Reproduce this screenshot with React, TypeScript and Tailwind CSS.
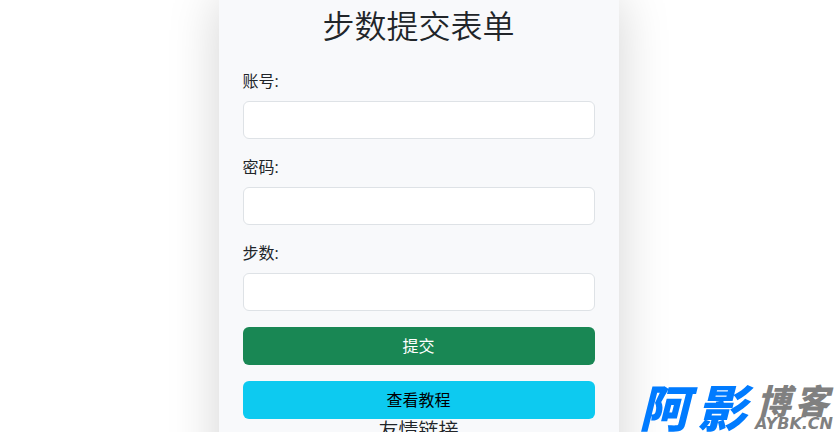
import { useState } from 'react'
import type { FormEvent } from 'react'

const fields = [
  { id: 'account', label: '账号:', type: 'text' },
  { id: 'password', label: '密码:', type: 'password' },
  { id: 'steps', label: '步数:', type: 'text' },
]

export default function App() {
  const [values, setValues] = useState<Record<string, string>>({})

  const handleSubmit = (e: FormEvent) => {
    e.preventDefault()
  }

  return (
    <div className="h-screen overflow-hidden bg-white font-['Open_Sans','Noto_Sans_CJK_SC',sans-serif] text-base text-[#212529]">
      <main className="mx-auto -mt-[17px] w-full max-w-[400px] bg-[#f8f9fb] p-6 shadow-[0_16px_48px_rgba(0,0,0,0.175)]">
        <h1 className="mb-6 text-center text-[32px] leading-[38px] font-[350]">步数提交表单</h1>

        <form onSubmit={handleSubmit} className="flex flex-col gap-4">
          {fields.map((field) => (
            <Field
              key={field.id}
              id={field.id}
              label={field.label}
              type={field.type}
              value={values[field.id] ?? ''}
              onChange={(v) => setValues({ ...values, [field.id]: v })}
            />
          ))}
          <button
            type="submit"
            className="h-[38px] w-full rounded-md bg-[#198754] text-white hover:bg-[#157347]"
          >
            提交
          </button>
          <button
            type="button"
            className="h-[38px] w-full rounded-md bg-[#0dcaf0] text-black hover:bg-[#31d2f2]"
          >
            查看教程
          </button>
        </form>

        <h2 className="mb-2 text-center text-xl leading-6 font-[350]">友情链接</h2>
      </main>

      <Watermark />
    </div>
  )
}

function Field({
  id,
  label,
  type,
  value,
  onChange,
}: {
  id: string
  label: string
  type: string
  value: string
  onChange: (v: string) => void
}) {
  return (
    <div>
      <label htmlFor={id} className="mb-2 block leading-6">
        {label}
      </label>
      <input
        id={id}
        type={type}
        value={value}
        onChange={(e) => onChange(e.target.value)}
        className="block h-[38px] w-full rounded-md border border-[#dee2e6] bg-white px-3 focus:border-[#86b7fe] focus:outline-none"
      />
    </div>
  )
}

// Blog mark pinned over the bottom right corner
function Watermark() {
  return (
    <div className="absolute right-1 bottom-0 flex items-end gap-2 font-['Noto_Sans_CJK_SC',sans-serif] font-black italic">
      <span className="flex gap-2 pb-1 text-[50px] leading-[46px] text-[#007bff]">
        <span>阿</span>
        <span>影</span>
      </span>
      <span className="flex flex-col items-end text-[#808080]">
        <span className="flex gap-1 pr-1 text-[34px] leading-8">
          <span>博</span>
          <span>客</span>
        </span>
        <span className="font-['DejaVu_Sans',sans-serif] text-base leading-4">AYBK.CN</span>
      </span>
    </div>
  )
}
